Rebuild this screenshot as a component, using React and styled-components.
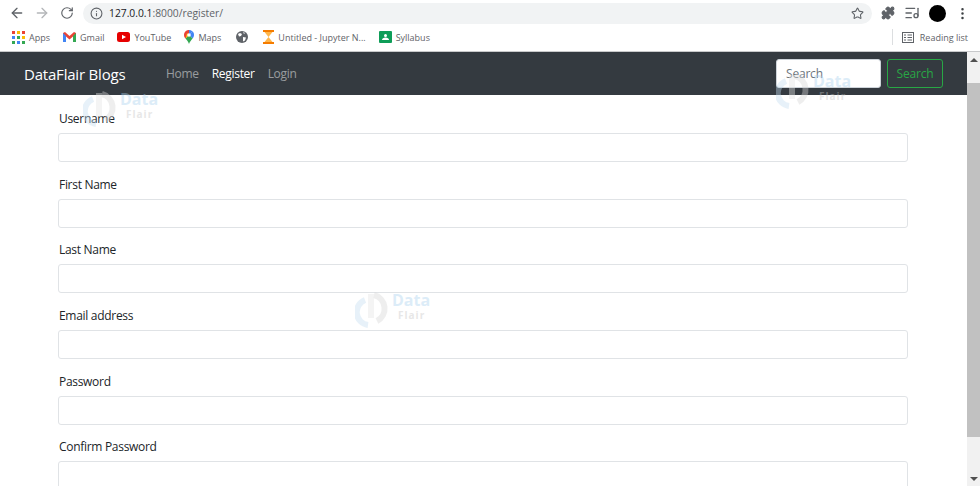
import styled, { createGlobalStyle } from 'styled-components';
import { ArrowLeft, ArrowRight, RotateCw, Info, Star, Puzzle, ListMusic, MoreVertical } from 'lucide-react';

const FIELDS = ['Username', 'First Name', 'Last Name', 'Email address', 'Password', 'Confirm Password'];
const WATERMARKS = [
	{ left: 83, top: 91 },
	{ left: 776, top: 73 },
	{ left: 355, top: 292 },
];
const APP_DOTS = ['#ea4335', '#fbbc04', '#ea4335', '#4285f4', '#34a853', '#fbbc04', '#34a853', '#4285f4', '#34a853'];

function GmailIcon() {
	return (
		<svg width="13" height="10" viewBox="0 0 13 10">
			<path d="M0 10V1l2-1 4.500 4L11 0l2 1v9h-3V4.500L6.500 7.500 3 4.500V10z" fill="#ea4335" />
			<path d="M0 1v9h3V4z" fill="#4285f4" />
			<path d="M13 1v9h-3V4z" fill="#34a853" />
		</svg>
	);
}

function YoutubeIcon() {
	return (
		<svg width="13" height="10" viewBox="0 0 13 10">
			<rect width="13" height="10" rx="2.500" fill="#e60000" />
			<path d="M5 2.800v4.400L9 5z" fill="#fff" />
		</svg>
	);
}

function MapsIcon() {
	return (
		<svg width="10" height="14" viewBox="0 0 10 14">
			<path d="M5 0C2 0 0 2.200 0 5c0 1.400.6 2.500 1.500 3.600L5 5z" fill="#ea4335" />
			<path d="M5 0c1.500 0 2.800.6 3.700 1.600L5 5z" fill="#4285f4" />
			<path d="M8.700 1.600C9.600 2.500 10 3.700 10 5c0 1.300-.6 2.400-1.400 3.500L5 5z" fill="#4285f4" />
			<path d="M1.500 8.600 5 5l3.600 3.500C7.200 10.300 5.600 12 5 14c-.6-2-2.100-3.700-3.500-5.400z" fill="#34a853" />
			<path d="M1.500 8.600 5 5 3 3z" fill="#fbbc04" />
			<circle cx="5" cy="5" r="1.800" fill="#fff" />
		</svg>
	);
}

function ClassroomIcon() {
	return (
		<svg width="13" height="12" viewBox="0 0 13 12">
			<rect width="13" height="12" rx="1" fill="#0f9d58" />
			<circle cx="6.500" cy="4.500" r="1.500" fill="#fff" />
			<path d="M3 9c0-1.500 1.500-2.500 3.500-2.500S10 7.500 10 9z" fill="#fff" />
		</svg>
	);
}

function GlobeIcon() {
	return (
		<svg width="12" height="12" viewBox="0 0 12 12">
			<circle cx="6" cy="6" r="6" fill="#5f6368" />
			<path d="M2 3l2-1 2 1-1 2-2 .5zM7 6l3 .5-1 3-2 1zM7 1l2 1-1 1z" fill="#fff" />
		</svg>
	);
}

function HourglassIcon() {
	return (
		<svg width="11" height="14" viewBox="0 0 11 14">
			<path d="M0 0h11v2H0zM0 12h11v2H0z" fill="#f57c00" />
			<path d="M1.500 2h8L5.500 7zM5.500 7l4 5h-8z" fill="#ffb74d" />
		</svg>
	);
}

function ReadingListIcon() {
	return (
		<svg width="12" height="11" viewBox="0 0 12 11" fill="none" stroke="#5f6368" strokeWidth="1">
			<rect x="0.500" y="0.500" width="11" height="10" />
			<path d="M2 3h2M2 5.500h2M2 8h2M5.500 3h4.500M5.500 5.500h4.500M5.500 8h4.500" />
		</svg>
	);
}

function LogoMark() {
	return (
		<svg width="35" height="36" viewBox="0 0 35 36" fill="none">
			<path d="M10 8a13 13 0 0 0 3 25" stroke="#c4def1" strokeWidth="6" />
			<path d="M16 2v24" stroke="#e6e6e6" strokeWidth="6" />
			<path d="M19 3a14 14 0 0 1 3 26" stroke="#d6d6d6" strokeWidth="6" />
		</svg>
	);
}

function App() {
	return (
		<Page>
			<GlobalStyle />
			<Toolbar>
				<NavIcon><ArrowLeft size={16} /></NavIcon>
				<NavIcon $disabled><ArrowRight size={16} /></NavIcon>
				<NavIcon><RotateCw size={14} /></NavIcon>
				<Omnibox>
					<Info size={13} color="#5f6368" />
					<Url>127.0.0.1<UrlPath>:8000/register/</UrlPath></Url>
					<StarButton><Star size={13} color="#5f6368" /></StarButton>
				</Omnibox>
				<ToolIcons>
					<Puzzle size={14} fill="#5f6368" color="#5f6368" />
					<ListMusic size={16} color="#5f6368" />
					<Avatar />
					<MoreVertical size={15} color="#3c4043" />
				</ToolIcons>
			</Toolbar>
			<Bookmarks>
				<Bookmark>
					<AppsGrid>
						{APP_DOTS.map((color, i) => <AppDot key={i} color={color} />)}
					</AppsGrid>
					Apps
				</Bookmark>
				<Bookmark><GmailIcon />Gmail</Bookmark>
				<Bookmark><YoutubeIcon />YouTube</Bookmark>
				<Bookmark><MapsIcon />Maps</Bookmark>
				<GlobeSlot><GlobeIcon /></GlobeSlot>
				<Bookmark><HourglassIcon />Untitled - Jupyter N...</Bookmark>
				<Bookmark><ClassroomIcon />Syllabus</Bookmark>
				<ReadingList><ReadingListIcon />Reading list</ReadingList>
			</Bookmarks>
			<Viewport>
				<Main>
					<Navbar>
						<Brand>DataFlair Blogs</Brand>
						<NavLinks>
							<NavLink>Home</NavLink>
							<NavLink $active>Register</NavLink>
							<NavLink>Login</NavLink>
						</NavLinks>
						<SearchForm>
							<SearchInput placeholder="Search" />
							<SearchButton>Search</SearchButton>
						</SearchForm>
					</Navbar>
					<Form>
						{FIELDS.map((field) => (
							<Field key={field}>
								<Label>{field}</Label>
								<Input />
							</Field>
						))}
					</Form>
				</Main>
				<Scrollbar>
					<ScrollArrow $up />
					<ScrollTrack><ScrollThumb /></ScrollTrack>
					<ScrollArrow />
				</Scrollbar>
				{WATERMARKS.map((mark) => (
					<Watermark key={mark.left} style={{ left: mark.left, top: mark.top - 52 }}>
						<LogoMark />
						<WatermarkText>
							<span>Data</span>
							<FlairWord>Flair</FlairWord>
						</WatermarkText>
					</Watermark>
				))}
			</Viewport>
		</Page>
	);
}

export default App;

const GlobalStyle = createGlobalStyle`
	html, body {
		margin: 0;
		padding: 0;
		background: #fff;
		overflow: hidden;
	}
	* {
		box-sizing: border-box;
	}
`;

const Page = styled.div`
	width: 980px;
	height: 486px;
	overflow: hidden;
	display: flex;
	flex-direction: column;
	font-family: 'Open Sans', 'Noto Sans', sans-serif;
`;

const Toolbar = styled.div`
	height: 26px;
	display: flex;
	align-items: center;
	padding: 0 9px 0 4px;
	flex-shrink: 0;
`;

const NavIcon = styled.div`
	width: 25px;
	display: flex;
	justify-content: center;
	color: ${(props) => (props.$disabled ? '#b4b6b9' : '#5f6368')};
`;

const Omnibox = styled.div`
	width: 789px;
	height: 21px;
	margin: 0 0 0 4px;
	padding: 0 8px 0 7px;
	border-radius: 11px;
	background: #f1f3f4;
	display: flex;
	align-items: center;
	gap: 6px;
`;

const Url = styled.div`
	font-size: 10.300px;
	color: #202124;
`;

const UrlPath = styled.span`
	color: #5f6368;
`;

const StarButton = styled.div`
	margin-left: auto;
	display: flex;
`;

const ToolIcons = styled.div`
	display: flex;
	align-items: center;
	gap: 9px;
	margin-left: 9px;
`;

const Avatar = styled.div`
	width: 17px;
	height: 17px;
	border-radius: 50%;
	background: #000;
`;

const Bookmarks = styled.div`
	height: 26px;
	display: flex;
	align-items: center;
	gap: 13px;
	padding: 0 12px 3px 12px;
	border-bottom: 1px solid #c8c9cb;
	flex-shrink: 0;
`;

const Bookmark = styled.div`
	display: flex;
	align-items: center;
	gap: 4px;
	font-size: 9px;
	color: #5f6368;
`;

const GlobeSlot = styled(Bookmark)`
	margin: 0 2px;
`;

const AppsGrid = styled.div`
	display: grid;
	grid-template-columns: repeat(3, 3px);
	gap: 2px;
`;

const AppDot = styled.div`
	width: 3px;
	height: 3px;
	background: ${(props) => props.color};
`;

const ReadingList = styled(Bookmark)`
	margin-left: auto;
	gap: 6px;
	padding-left: 9px;
	border-left: 1px solid #dcdee0;
	height: 16px;
`;

const Viewport = styled.div`
	position: relative;
	flex: 1;
	min-height: 0;
	display: flex;
	overflow: hidden;
`;

const Main = styled.div`
	flex: 1;
	min-width: 0;
`;

const Navbar = styled.nav`
	height: 43px;
	background: #343a40;
	display: flex;
	align-items: center;
	padding: 0 24px;
`;

const Brand = styled.div`
	font-size: 15px;
	letter-spacing: -0.2px;
	color: #fff;
	width: 142px;
`;

const NavLinks = styled.div`
	display: flex;
	gap: 13px;
`;

const NavLink = styled.div`
	font-size: 12px;
	letter-spacing: -0.3px;
	color: ${(props) => (props.$active ? '#fff' : 'rgba(255, 255, 255, 0.5)')};
`;

const SearchForm = styled.div`
	margin-left: auto;
	display: flex;
	gap: 6px;
`;

const SearchInput = styled.input`
	width: 105px;
	height: 29px;
	padding: 0 9px;
	border: 1px solid #ced4da;
	border-radius: 3px;
	background: #fff;
	font: 12px 'Open Sans', sans-serif;
	letter-spacing: -0.2px;
	&::placeholder {
		color: #6c757d;
		opacity: 1;
	}
`;

const SearchButton = styled.button`
	width: 56px;
	height: 29px;
	padding: 0;
	border: 1px solid #28a745;
	border-radius: 3px;
	background: transparent;
	color: #28a745;
	font: 12px 'Open Sans', sans-serif;
	letter-spacing: -0.2px;
`;

const Form = styled.div`
	padding: 14px 59px 0 58px;
	display: flex;
	flex-direction: column;
	gap: 12.670px;
`;

const Field = styled.div`
	display: flex;
	flex-direction: column;
	gap: 4px;
`;

const Label = styled.label`
	font-size: 12px;
	letter-spacing: -0.3px;
	line-height: 20px;
	padding-left: 1px;
	color: #212529;
`;

const Input = styled.input`
	height: 29px;
	border: 1px solid #e0e3e6;
	border-radius: 3px;
	background: #fff;
`;

const Scrollbar = styled.div`
	width: 13px;
	background: #f1f1f1;
	display: flex;
	flex-direction: column;
`;

const ScrollArrow = styled.div`
	height: 15px;
	display: flex;
	align-items: center;
	justify-content: center;
	&::after {
		content: '';
		border-left: 4px solid transparent;
		border-right: 4px solid transparent;
		border-${(props) => (props.$up ? 'bottom' : 'top')}: 4px solid #505050;
	}
`;

const ScrollTrack = styled.div`
	flex: 1;
	padding-top: 16px;
`;

const ScrollThumb = styled.div`
	height: 354px;
	background: #c1c1c1;
`;

const Watermark = styled.div`
	position: absolute;
	display: flex;
	align-items: flex-start;
	gap: 2px;
	opacity: 0.4;
	pointer-events: none;
`;

const WatermarkText = styled.div`
	display: flex;
	flex-direction: column;
	gap: 1px;
	font: bold 16px/16px 'Open Sans', sans-serif;
	color: #a9d2ee;
`;

const FlairWord = styled.span`
	font-size: 10px;
	line-height: 12px;
	letter-spacing: 1px;
	padding-left: 6px;
	color: #c4c4c4;
`;
